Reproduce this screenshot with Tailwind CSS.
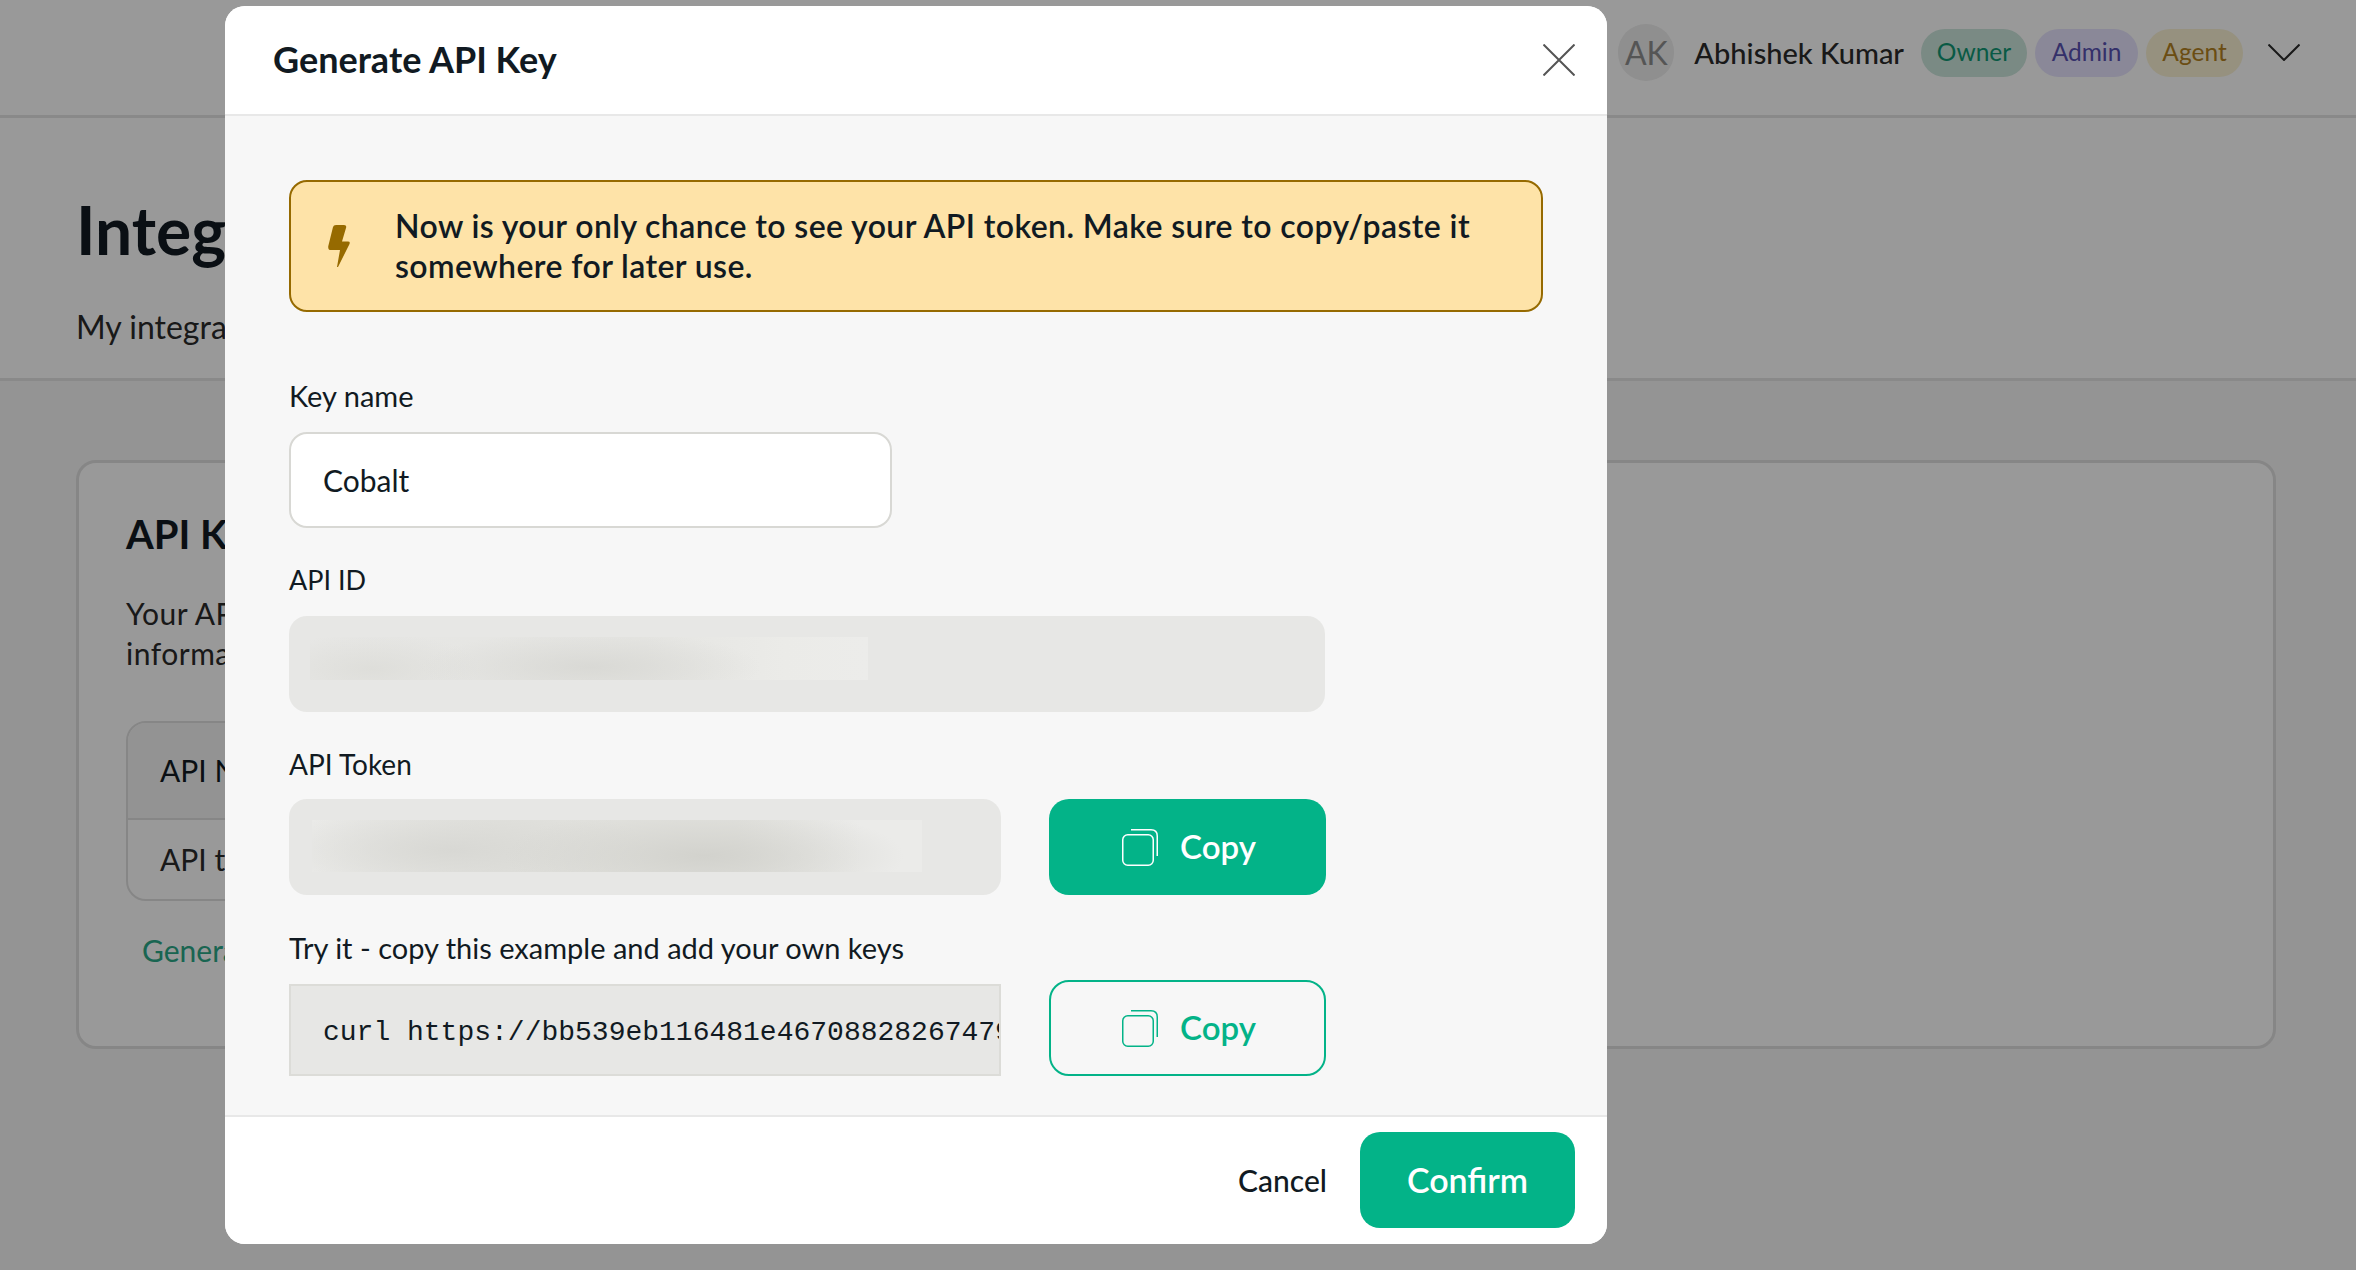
<!DOCTYPE html>
<html>
<head>
  <meta charset="UTF-8">
  <meta name="viewport" content="width=device-width, initial-scale=1.0">
  <title>Generate API Key</title>
  <script src="https://cdn.jsdelivr.net/npm/@tailwindcss/browser@4"></script>
</head>
<body class="bg-[#f7f7f7] font-['Lato',sans-serif] text-[#111a22] overflow-hidden">

  <div class="relative w-[2356px] h-[1270px] overflow-hidden">

    <!-- page behind the dialog -->
    <header class="h-[118px] bg-white border-b-[3px] border-[#e4e4e4] flex justify-end items-start pt-[24px] pr-[56px]">
      <div class="flex items-center h-[57px]">
        <div class="w-[56px] h-[57px] rounded-full bg-[#eeeeee] text-[#8e8e8e] text-[32px] flex items-center justify-center">AK</div>
        <span class="ml-[20px] text-[29px] font-medium text-[#2a2a2a]">Abhishek Kumar</span>
        <span class="ml-[17px] w-[106px] h-[48px] rounded-full bg-[#cbe6dc] text-[#109673] text-[24.500px] flex items-center justify-center">Owner</span>
        <span class="ml-[8px] w-[103px] h-[48px] rounded-full bg-[#e6e3fd] text-[#5850b1] text-[24.500px] flex items-center justify-center">Admin</span>
        <span class="ml-[8px] w-[97px] h-[48px] rounded-full bg-[#faf2d4] text-[#b28021] text-[24.500px] flex items-center justify-center">Agent</span>
        <svg class="ml-[25px]" width="32" height="17" viewBox="0 0 32 17" fill="none" stroke="#2a2a2a" stroke-width="2"><path d="M0.5 0.5 16 16 31.5 0.5"/></svg>
      </div>
    </header>

    <section class="h-[263px] bg-white border-b-[3px] border-[#e4e4e4] pl-[76px]">
      <h1 class="pt-[76px] text-[66px] leading-[72px] font-bold">Integrations</h1>
      <p class="mt-[41px] text-[32px] leading-[40px] text-[#2a2a2a]">My integrations</p>
    </section>

    <section class="mt-[79px] ml-[76px] w-[2200px] h-[589px] bg-white border-[3px] border-[#e0e0e0] rounded-[20px] pl-[47px] pt-[49px]">
      <h2 class="text-[40px] leading-[44px] font-bold">API Keys</h2>
      <p class="mt-[37px] text-[30px] leading-[40px] tracking-[0.5px] text-[#2a2a2a]">Your API keys give access to your account<br>information</p>
      <div class="mt-[48px] w-[1200px] h-[180px] border-[2px] border-[#e0e0e0] rounded-[20px] overflow-hidden">
        <div class="h-[97px] bg-[#f5f5f5] border-b-[2px] border-[#e0e0e0] pl-[32px] flex items-center text-[30px]">API Name</div>
        <div class="h-[79px] pl-[32px] flex items-center text-[30px] text-[#2a2a2a]">API token</div>
      </div>
      <a class="block mt-[29px] ml-[16px] text-[30px] leading-[40px] text-[#2ba888]">Generate API Key</a>
    </section>

    <!-- dialog -->
    <div class="absolute inset-0 bg-black/40">
      <div class="absolute left-[225px] top-[6px] w-[1382px] h-[1238px] rounded-[20px] overflow-hidden bg-[#f7f7f7] flex flex-col">

        <div class="h-[110px] shrink-0 bg-white border-b-[2px] border-[#e8e8e8] flex items-center justify-between pl-[48px] pr-[32px]">
          <h3 class="text-[36px] font-bold pb-[2px]">Generate API Key</h3>
          <svg width="32" height="32" viewBox="0 0 32 32" fill="none" stroke="#555" stroke-width="2"><path d="M0.5 0.5 31.5 31.5M31.5 0.5 0.5 31.5"/></svg>
        </div>

        <div class="flex-1 px-[64px] pt-[64px]">
          <div class="w-[1254px] h-[132px] bg-[#fee3a8] border-[2px] border-[#966a00] rounded-[18px] flex items-center pl-[37px]">
            <svg class="shrink-0" width="23" height="42" viewBox="0 0 23 42" fill="#966a00"><path d="M5 2Q5.5 0 8 0H16Q19 0 18 3L14 16.500H20Q22.500 16.500 21.500 19L10 42H9L12 25H3Q-.3 25 .3 21Z"/></svg>
            <p class="ml-[44px] text-[32px] leading-[40px] tracking-[0.4px] font-semibold">Now is your only chance to see your API token. Make sure to copy/paste it<br>somewhere for later use.</p>
          </div>

          <label class="block mt-[64px] text-[29px] leading-[40px]">Key name</label>
          <div class="mt-[16px] w-[603px] h-[96px] bg-white border-[2px] border-[#d8d8d4] rounded-[18px] flex items-center pl-[32px] text-[30px]">Cobalt</div>

          <label class="block mt-[32px] text-[27px] leading-[40px]">API ID</label>
          <div class="mt-[16px] w-[1036px] h-[96px] bg-[#e7e7e5] rounded-[18px] pl-[21px] pt-[21px]">
            <div class="w-[558px] h-[43px] bg-[radial-gradient(ellipse_170px_36px_at_281px_30px,#d9d9d5,transparent),radial-gradient(ellipse_110px_36px_at_62px_32px,#dedeDA,transparent),linear-gradient(90deg,#e7e7e5,#e5e5e2_60%,#ebebe8_85%,#ececea)]"></div>
          </div>

          <label class="block mt-[32px] text-[28px] leading-[40px]">API Token</label>
          <div class="mt-[15px] flex gap-[48px]">
            <div class="w-[712px] h-[96px] bg-[#e7e7e5] rounded-[18px] pl-[23px] pt-[21px]">
              <div class="w-[610px] h-[52px] bg-[radial-gradient(ellipse_200px_50px_at_392px_36px,#d2d2cd,transparent),radial-gradient(ellipse_200px_50px_at_140px_30px,#d8d8d4,transparent),linear-gradient(90deg,#ececea,#e2e2de_30%,#e2e2de_70%,#ebebe9_90%)]"></div>
            </div>
            <button class="w-[277px] h-[96px] bg-[#03b388] rounded-[20px] flex items-center justify-center gap-[22px] pl-[3px] text-white text-[33px] font-semibold">
              <svg width="36" height="37" viewBox="0 0 36 37" fill="none" stroke="currentColor" stroke-width="1.500"><rect x="0.750" y="5.750" width="30.500" height="30.500" rx="5"/><path d="M9 .75H29Q35.250 .75 35.250 7V27"/></svg>
              Copy
            </button>
          </div>

          <label class="block mt-[33px] text-[29px] leading-[40px]">Try it - copy this example and add your own keys</label>
          <div class="flex gap-[48px] items-end h-[96px] mt-[12px]">
            <div class="w-[712px] h-[92px] bg-[#e7e7e5] border-[2px] border-[#dcdcd8] flex items-center pl-[32px] pt-[5px] overflow-hidden font-['Liberation_Mono',monospace] text-[28px] whitespace-nowrap">curl https://bb539eb116481e46708828267479</div>
            <button class="w-[277px] h-[96px] border-[2px] border-[#03b388] rounded-[20px] flex items-center justify-center gap-[22px] pl-[3px] text-[#03b388] text-[33px] font-semibold">
              <svg width="36" height="37" viewBox="0 0 36 37" fill="none" stroke="currentColor" stroke-width="1.500"><rect x="0.750" y="5.750" width="30.500" height="30.500" rx="5"/><path d="M9 .75H29Q35.250 .75 35.250 7V27"/></svg>
              Copy
            </button>
          </div>
        </div>

        <div class="h-[129px] shrink-0 bg-white border-t-[2px] border-[#e8e8e8] flex items-start justify-end pt-[15px] pr-[32px]">
          <button class="h-[96px] text-[30px] font-medium mr-[33px]">Cancel</button>
          <button class="w-[215px] h-[96px] pb-[2px] bg-[#03b388] rounded-[20px] text-white text-[34px] font-semibold">Confirm</button>
        </div>
      </div>
    </div>
  </div>

</body>
</html>
